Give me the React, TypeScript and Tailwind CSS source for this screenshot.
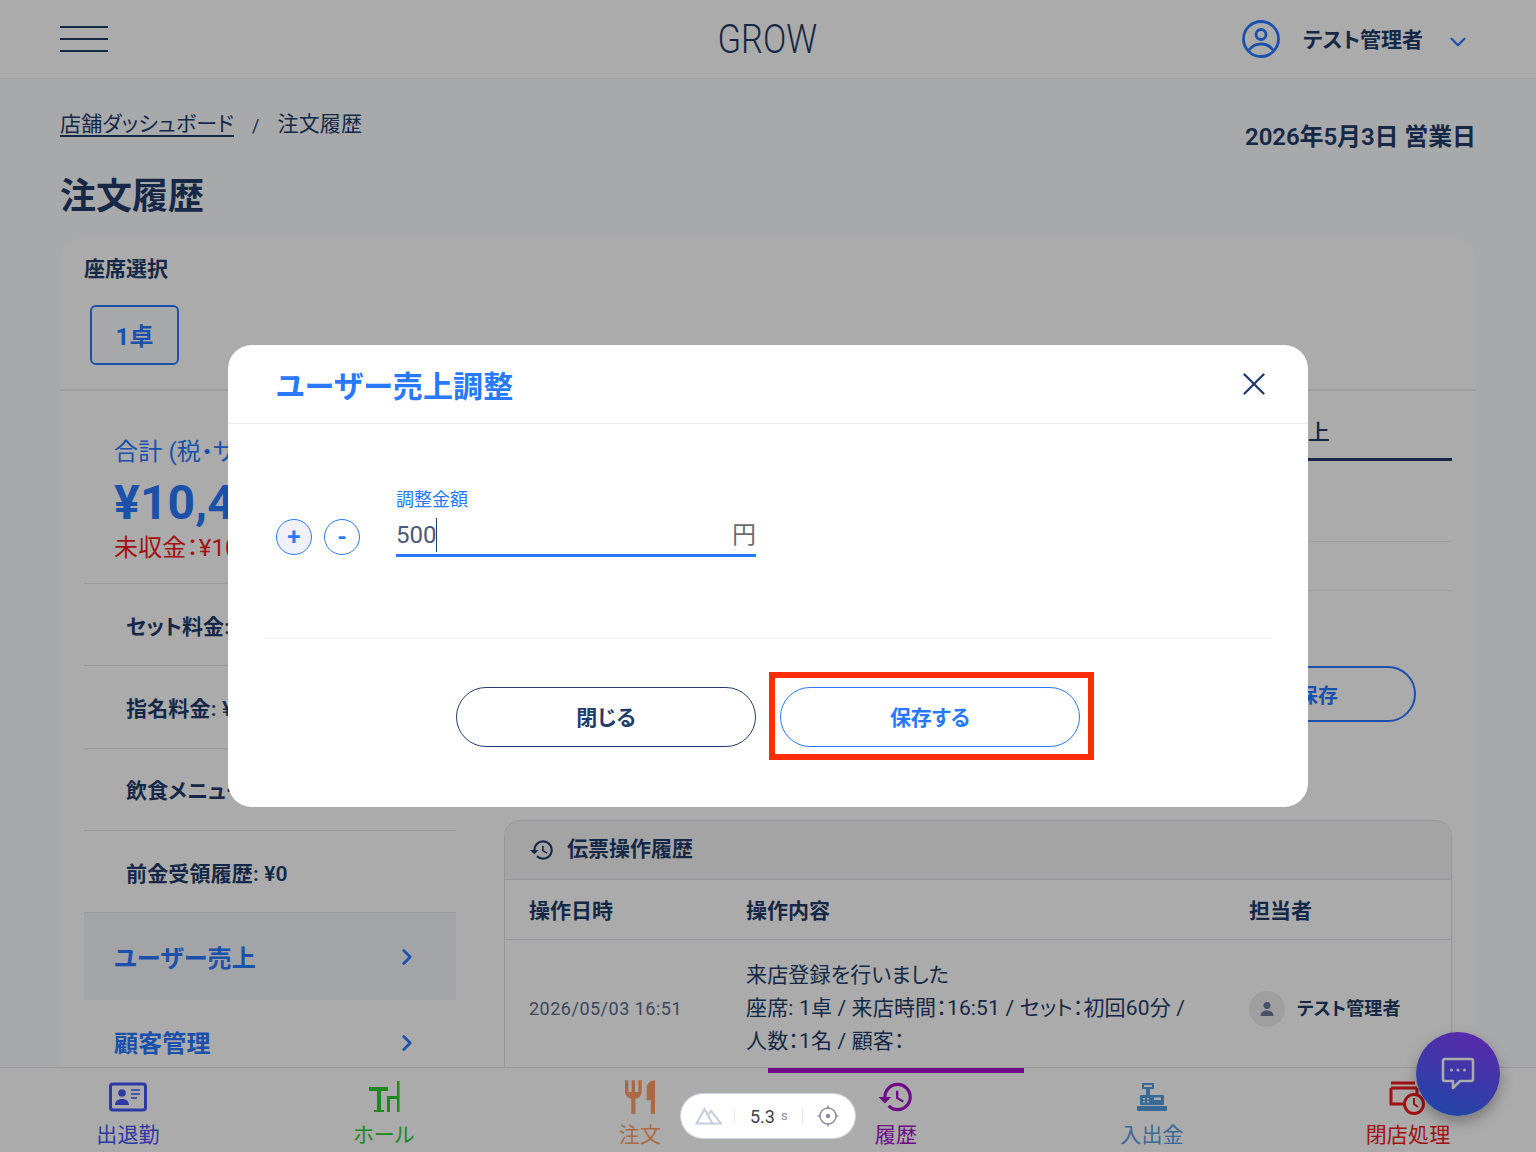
import { ChevronDown, ChevronRight, X } from "lucide-react";
import { MdHistory, MdRestaurant } from "react-icons/md";
import type { ReactNode } from "react";

const FONT = "font-['Roboto','Noto_Sans_CJK_JP',sans-serif] [font-feature-settings:'palt'] tracking-[0.01em]";

function IdCardIcon() {
  return (
    <svg width="38" height="30" viewBox="0 0 38 30" fill="none">
      <rect x="1.5" y="2" width="35" height="26" rx="2.5" stroke="currentColor" strokeWidth="3" />
      <circle cx="13" cy="11" r="3.8" fill="currentColor" />
      <path d="M6 23c0-4 3.5-6 7-6s7 2 7 6z" fill="currentColor" />
      <path d="M22 8h9M22 12h9M22 16h6" stroke="currentColor" strokeWidth="1.6" />
    </svg>
  );
}

function HallIcon() {
  return (
    <svg width="34" height="34" viewBox="0 0 34 34" fill="currentColor">
      <path d="M2 7h19v4h-7v19h3v2H7v-2h3V11H2z" />
      <path d="M30 1h2.500v31H30V19h-7v13h-3V16h10z" />
    </svg>
  );
}

function RegisterIcon() {
  return (
    <svg width="30" height="28" viewBox="0 0 30 28" fill="currentColor">
      <path fillRule="evenodd" d="M5 0h12v6h-4v6H9V6H5zM7 2v2h8V2z" />
      <path
        fillRule="evenodd"
        d="M4 12h22a1 1 0 0 1 1 1v9H3v-9a1 1 0 0 1 1-1zM17 14.500v2.500h7v-2.500zM6 15v1.500h2V15zM10 15v1.500h2V15zM6 18v1.500h2V18zM10 18v1.500h2V18z"
      />
      <rect x="0" y="23" width="30" height="5" />
    </svg>
  );
}

function ClosingIcon() {
  return (
    <svg width="38" height="36" viewBox="0 0 38 36" fill="none" stroke="currentColor" strokeWidth="3">
      <path d="M2 4h24M2 9h26" />
      <path d="M2 9v16h16M28 9v6" />
      <circle cx="25" cy="25" r="9.500" fill="#fff" />
      <path d="M25 19v6l4 3" strokeWidth="2" />
    </svg>
  );
}

function UserCircleIcon() {
  return (
    <svg width="38" height="38" viewBox="0 0 38 38" fill="none" stroke="#2979ff" strokeWidth="2.800">
      <circle cx="19" cy="19" r="17.500" />
      <circle cx="19" cy="14.500" r="5" />
      <path d="M7 30c3-4 7.500-6 12-6s9 2 12 6" />
    </svg>
  );
}

function ChatIcon() {
  return (
    <svg width="36" height="36" viewBox="0 0 36 36" fill="none">
      <path
        d="M5 3h26a2 2 0 0 1 2 2v18a2 2 0 0 1-2 2H20l-7 7v-7H5a2 2 0 0 1-2-2V5a2 2 0 0 1 2-2z"
        stroke="#fff"
        strokeWidth="2.500"
        strokeLinejoin="round"
      />
      <circle cx="11.500" cy="14" r="1.500" fill="#fff" />
      <circle cx="18" cy="14" r="1.500" fill="#fff" />
      <circle cx="24.500" cy="14" r="1.500" fill="#fff" />
    </svg>
  );
}

const NAV_ITEMS: { label: string; color: string; icon: ReactNode; active?: boolean }[] = [
  { label: "出退勤", color: "text-[#4557f5]", icon: <IdCardIcon /> },
  { label: "ホール", color: "text-[#2ecc2e]", icon: <HallIcon /> },
  { label: "注文", color: "text-[#ff9e67]", icon: <MdRestaurant size={40} /> },
  { label: "履歴", color: "text-[#a50fc9]", icon: <MdHistory size={38} />, active: true },
  { label: "入出金", color: "text-[#569ee0]", icon: <RegisterIcon /> },
  { label: "閉店処理", color: "text-[#f01a1a]", icon: <ClosingIcon /> },
];

const SUMMARY_ROWS = ["セット料金: ¥10,000", "指名料金: ¥0", "飲食メニュー: ¥0", "前金受領履歴: ¥0"];

export default function App() {
  return (
    <div className={`relative flex h-[1152px] w-[1536px] flex-col overflow-hidden bg-[#fbfcff] text-[#233d6b] ${FONT}`}>
      <header className="grid h-[79px] shrink-0 grid-cols-3 items-center border-b border-[#f0f0f0] bg-white pl-[60px] pr-[65px]">
        <div className="flex w-[48px] flex-col gap-[10px]">
          <div className="h-[2px] bg-[#233d6b]" />
          <div className="h-[2px] bg-[#233d6b]" />
          <div className="h-[2px] bg-[#233d6b]" />
        </div>
        <div className="flex justify-center pl-[3px]">
          <span className="origin-center scale-x-[0.84] text-[41px] font-light leading-none tracking-normal">GROW</span>
        </div>
        <div className="flex items-center justify-end">
          <UserCircleIcon />
          <span className="ml-[23px] pt-[3px] text-[21px] font-semibold tracking-normal">テスト管理者</span>
          <ChevronDown className="ml-[22px] mt-[5px] text-[#2979ff]" size={26} strokeWidth={2} />
        </div>
      </header>

      <main className="min-h-0 flex-1 overflow-hidden px-[60px] pt-[32px]">
        <div className="flex h-[40px] items-start justify-between">
          <div className="flex h-[28px] items-center text-[21px]">
            <span className="underline underline-offset-4">店舗ダッシュボード</span>
            <span className="mx-[18px] text-[18px]">/</span>
            <span>注文履歴</span>
          </div>
          <div className="mt-[12px] text-[24px] font-semibold leading-[28px] tracking-[-0.1px]">2026年5月3日 営業日</div>
        </div>
        <h1 className="mt-[24px] text-[36px] font-bold leading-[44px] tracking-normal">注文履歴</h1>

        <section className="mt-[17px] rounded-t-[24px] bg-white">
          <div className="border-b-2 border-[#eeeeee] px-[24px] pb-[24px] pt-[19px]">
            <div className="text-[21px] font-semibold leading-[28px] tracking-normal">座席選択</div>
            <button className="ml-[6px] mt-[22px] flex h-[60px] w-[89px] items-center justify-center rounded-[6px] border-2 border-[#2979ff] bg-[#fbfcff] pt-[4px] text-[24px] font-bold text-[#2979ff]">
              1卓
            </button>
          </div>

          <div className="flex pl-[24px]">
            <div className="w-[372px] shrink-0">
              <div className="h-[193px] overflow-hidden whitespace-nowrap border-b border-[#e8e8e8] pl-[30px] pt-[47px]">
                <div className="text-[24px] leading-[28px] text-[#2979ff]">合計 (税・サ込)</div>
                <div className="mt-[7px] text-[48px] font-bold leading-[60px] text-[#2979ff]">¥10,450</div>
                <div className="-mt-px text-[24px] leading-[32px] text-[#f01a1a]">未収金{"\uFF1A"}¥10,450</div>
              </div>
              {SUMMARY_ROWS.map((row) => (
                <div
                  key={row}
                  className="flex h-[82.3px] items-center border-b border-[#e8e8e8] pl-[42px] pt-[6px] text-[21px] font-semibold"
                >
                  {row}
                </div>
              ))}
              <div className="flex h-[87px] items-center justify-between bg-[#f4f5fa] pl-[30px] pr-[36px] text-[24px] font-semibold text-[#2979ff]">
                <span className="pt-[4px]">ユーザー売上</span>
                <ChevronRight size={26} strokeWidth={2.5} />
              </div>
              <div className="flex h-[86px] items-center justify-between pl-[30px] pr-[36px] text-[24px] font-semibold text-[#2979ff]">
                <span className="pt-[2px]">顧客管理</span>
                <ChevronRight size={26} strokeWidth={2.5} />
              </div>
            </div>

            <div className="ml-[48px] flex w-[948px] flex-col">
              <div className="flex h-[70px] justify-end">
                <div className="flex w-[474px] items-center justify-end border-b-[3px] border-[#233d6b] pr-[122px] pt-[16px] text-[22px] font-medium">
                  ユーザー売上
                </div>
              </div>
              <div className="h-[81px] border-b border-[#eeeeee]" />
              <div className="h-[49px] border-b border-[#eeeeee]" />
              <button className="mr-[36px] mt-[75px] flex h-[56px] w-[188px] items-center justify-center self-end rounded-full border-2 border-[#2979ff] pr-[8px] pt-[4px] text-[20px] font-semibold text-[#2979ff]">
                保存
              </button>

              <div className="mt-[98px] rounded-t-[16px] border border-[#e0e2ea]">
                <div className="flex h-[59px] items-center gap-[12px] rounded-t-[16px] border-b border-[#e0e2ea] bg-[#f5f5f5] pl-[24px] text-[21px] font-semibold tracking-normal">
                  <MdHistory size={26} />
                  伝票操作履歴
                </div>
                <div className="grid h-[60px] grid-cols-[217px_503px_1fr] items-center border-b border-[#e0e2ea] pl-[24px] pt-[4px] text-[21px] font-semibold tracking-normal">
                  <span>操作日時</span>
                  <span>操作内容</span>
                  <span>担当者</span>
                </div>
                <div className="grid grid-cols-[217px_503px_1fr] items-center pb-[32px] pl-[24px] pt-[19px]">
                  <span className="text-[18px] tracking-[0.5px] text-[#5b6b86]">2026/05/03 16:51</span>
                  <div className="text-[21px] leading-[33px]">
                    <div>来店登録を行いました</div>
                    <div>座席: 1卓 / 来店時間{"\uFF1A"}16:51 / セット{"\uFF1A"}初回60分 /</div>
                    <div>人数{"\uFF1A"}1名 / 顧客{"\uFF1A"}</div>
                  </div>
                  <div className="flex items-center gap-[12px]">
                    <div className="flex h-[36px] w-[36px] items-center justify-center rounded-full bg-[#eeeeee]">
                      <svg width="18" height="18" viewBox="0 0 18 18" fill="#6b7a94">
                        <circle cx="9" cy="5.500" r="3.500" />
                        <path d="M2.500 16c0-4 3-5.500 6.500-5.500s6.500 1.500 6.500 5.500z" />
                      </svg>
                    </div>
                    <span className="text-[18px] font-bold">テスト管理者</span>
                  </div>
                </div>
              </div>
            </div>
          </div>
        </section>
      </main>

      <nav className="relative z-10 grid h-[85px] shrink-0 grid-cols-6 border-t border-[#e5e5e5] bg-white">
        {NAV_ITEMS.map((item) => (
          <div
            key={item.label}
            className={`flex flex-col items-center border-t-[5px] ${item.color} ${item.active ? "border-[#a50fc9]" : "border-transparent"}`}
          >
            <div className="flex h-[46px] items-center pt-[2px]">{item.icon}</div>
            <span className="mt-[2px] text-[21px] leading-[28px]">{item.label}</span>
          </div>
        ))}
      </nav>

      <button className="absolute left-[1416px] top-[1032px] z-10 flex h-[84px] w-[84px] items-center justify-center rounded-full bg-[linear-gradient(20deg,#3368fa_10%,#8a3cff_95%)] shadow-[0_6px_14px_rgba(0,0,0,0.3)]">
        <ChatIcon />
      </button>

      {/* overlay with the adjustment dialog */}
      <div className="absolute inset-0 z-20 flex items-center justify-center bg-black/[0.33]">
        <div className="h-[462px] w-[1080px] rounded-[24px] bg-white">
          <div className="flex h-[79px] items-center justify-between border-b border-[#eeeeee] pl-[48px] pr-[35px]">
            <h2 className="pt-[4px] text-[30px] font-bold text-[#2979ff]">ユーザー売上調整</h2>
            <X size={38} strokeWidth={1.5} />
          </div>
          <div className="mx-[36px] flex h-[215px] items-start border-b border-[#eeeeee] pl-[12px] pt-[63px]">
            <div className="mt-[32px] flex gap-[12px]">
              <div className="flex h-[36px] w-[36px] items-center justify-center rounded-full border-[1.75px] border-[#2979ff] bg-[#f0f1f8] text-[24px] font-semibold leading-none text-[#2979ff]">
                +
              </div>
              <div className="flex h-[36px] w-[36px] items-center justify-center rounded-full border-[1.75px] border-[#2979ff] text-[24px] font-bold leading-none text-[#2979ff]">
                -
              </div>
            </div>
            <div className="ml-[36px] w-[360px]">
              <div className="text-[18px] leading-[26px] tracking-normal text-[#2979ff]">調整金額</div>
              <div className="flex h-[44px] items-center justify-between border-b-[3px] border-[#2979ff] pt-[3px] text-[24px] tracking-normal">
                <span className="flex items-center text-[#4a5a78]">
                  500
                  <span className="h-[34px] w-px bg-[#233d6b]" />
                </span>
                <span className="text-[#6b6b6b]">円</span>
              </div>
            </div>
          </div>
          <div className="flex justify-center gap-[24px] pt-[48px]">
            <button className="h-[60px] w-[300px] rounded-full border-[1.5px] border-[#233d6b] pt-[4px] text-[21px] font-semibold tracking-normal">
              閉じる
            </button>
            <div className="relative">
              <button className="h-[60px] w-[300px] rounded-full border-[1.5px] border-[#2979ff] pt-[4px] text-[21px] font-semibold tracking-normal text-[#2979ff]">
                保存する
              </button>
              <div className="absolute -bottom-[13px] -left-[11px] -right-[14px] -top-[15px] border-[6px] border-[#ff2d00]" />
            </div>
          </div>
        </div>
      </div>

      {/* devtools timing pill, sits above the dimmed page */}
      <div className="absolute left-[681px] top-[1094px] z-30 flex h-[44px] w-[174px] items-center rounded-full bg-white tracking-normal text-[#3b4250] shadow-[0_0_0_1px_rgba(220,225,240,0.8)]">
        <svg className="ml-[14px]" width="28" height="18" viewBox="0 0 28 18" fill="none" stroke="#c6ccdc" strokeWidth="2">
          <path d="M1.500 16.500 9.500 2l8 14.500z" />
          <path d="M13 8l3-4 10 12.500h-8" />
        </svg>
        <div className="ml-[11px] h-[16px] w-px bg-[#e8eaf0]" />
        <span className="ml-[15px] text-[18px]">5.3</span>
        <span className="ml-[6px] text-[13px] text-[#8a8f9c]">s</span>
        <div className="ml-[14px] h-[16px] w-px bg-[#e8eaf0]" />
        <svg className="ml-[13px]" width="24" height="24" viewBox="0 0 24 24" fill="none" stroke="#8a8f9c" strokeWidth="1.500">
          <circle cx="12" cy="12" r="8" />
          <circle cx="12" cy="12" r="1.500" fill="#8a8f9c" />
          <path d="M12 1.500v3M12 19.500v3M1.500 12h3M19.500 12h3" />
        </svg>
      </div>
    </div>
  );
}
